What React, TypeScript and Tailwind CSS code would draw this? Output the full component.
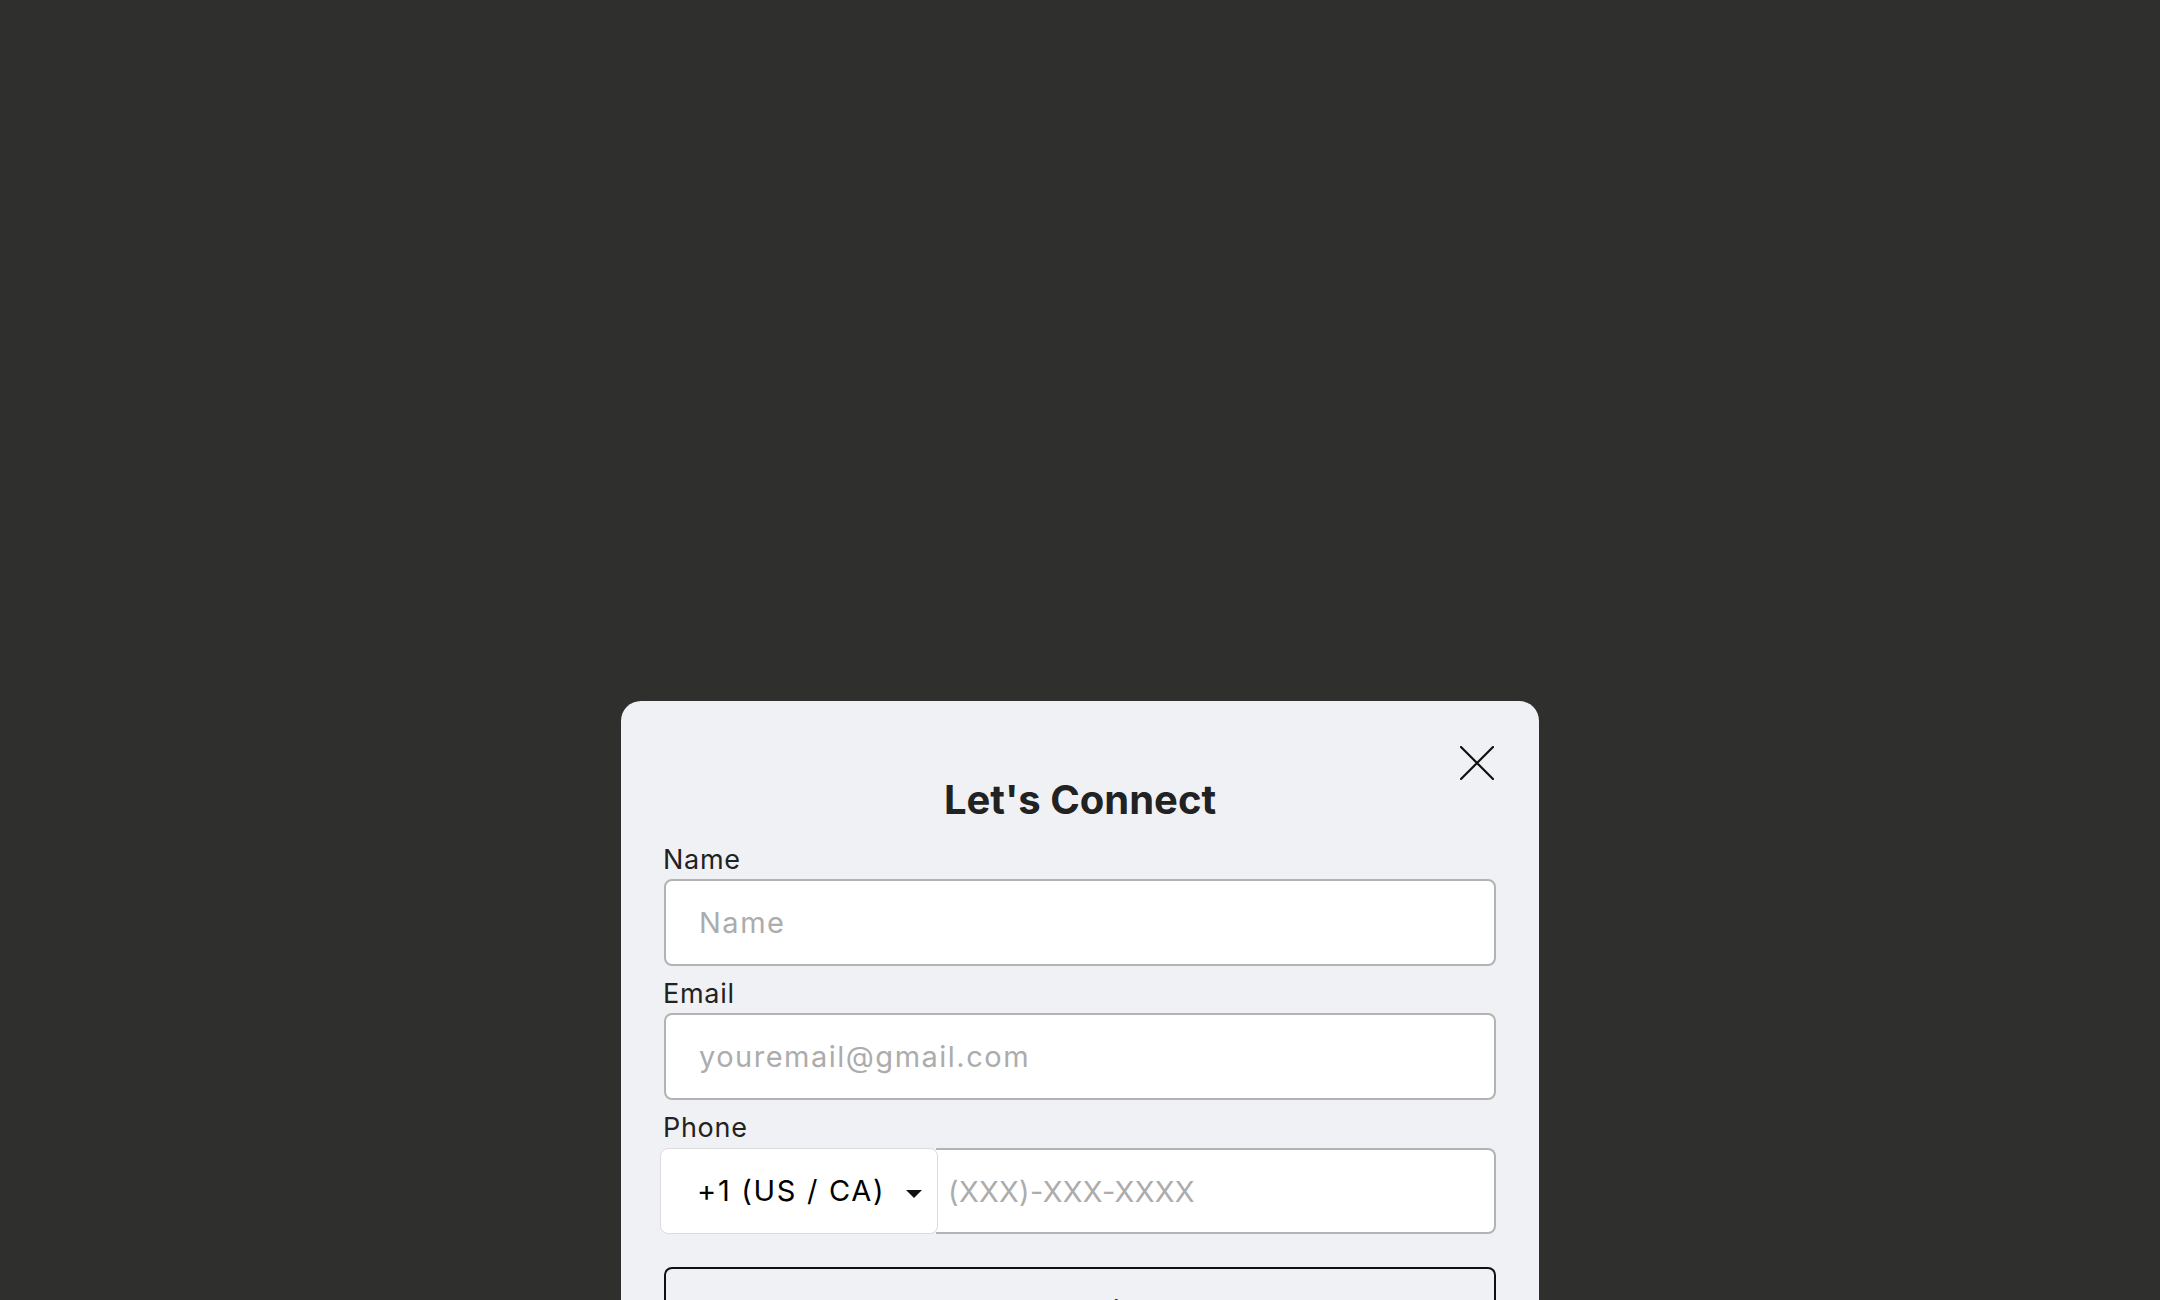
import { useState } from 'react';

const inputCls =
  'w-full h-[87px] px-[33px] rounded-[8px] border-2 border-[#b3b3b3] bg-white text-[29px] tracking-[1.5px] text-[#222] placeholder-[#acacac] focus:outline-none';

function Label({ children }: { children: string }) {
  return <label className="block -ml-[1px] text-[27px] leading-[32px] tracking-[0.7px] text-[#222] mb-[3px]">{children}</label>;
}

export default function App() {
  const [name, setName] = useState('');
  const [email, setEmail] = useState('');
  const [phone, setPhone] = useState('');

  return (
    <div
      className="h-screen w-full overflow-hidden bg-[#2f2f2d] flex justify-center pt-[701px]"
      style={{ fontFamily: 'Inter, "Noto Sans", sans-serif' }}
    >
      <div className="relative w-[918px] h-[700px] bg-[#f0f1f5] rounded-[20px] px-[43px] pt-[75px]">
        <button className="absolute top-[45px] right-[45px] w-[34px] h-[34px]" aria-label="Close">
          <svg viewBox="0 0 34 34" className="w-full h-full" fill="none" stroke="#111" strokeWidth="2.2" strokeLinecap="round">
            <path d="M1 1 L33 33 M33 1 L1 33" />
          </svg>
        </button>

        <h2 className="text-center text-[40px] leading-[48px] font-bold text-[#222] mb-[20px]">Let's Connect</h2>

        <Label>Name</Label>
        <input className={inputCls} placeholder="Name" value={name} onChange={(e) => setName(e.target.value)} />

        <div className="mt-[12px]">
          <Label>Email</Label>
          <input className={inputCls} placeholder="youremail@gmail.com" value={email} onChange={(e) => setEmail(e.target.value)} />
        </div>

        <div className="mt-[12px]">
          <Label>Phone</Label>
          <div className="flex h-[86px] mt-[4px]">
            <div className="relative z-10 -ml-[4px] w-[278px] shrink-0 flex items-center pl-[36px] pr-[15px] bg-white border border-[#dcdcdc] rounded-[8px] text-[29px] tracking-[1.7px] text-black">
              <span className="flex-1 whitespace-nowrap">+1 (US / CA)</span>
              <svg viewBox="0 0 16 8" className="w-[16px] h-[8px] mt-[6px] shrink-0">
                <path d="M0 0 L16 0 L8 8 Z" fill="#111" />
              </svg>
            </div>
            <input
              className="flex-1 min-w-0 h-full -ml-[2px] pl-[12px] pr-[20px] bg-white border-2 border-l-0 border-[#b3b3b3] rounded-r-[8px] text-[29px] tracking-[0.3px] text-[#222] placeholder-[#acacac] focus:outline-none"
              placeholder="(XXX)-XXX-XXXX"
              value={phone}
              onChange={(e) => setPhone(e.target.value)}
            />
          </div>
        </div>

        <button className="mt-[33px] w-full h-[87px] rounded-[8px] border-2 border-[#111] text-[29px] tracking-[1.5px] text-[#222]">
          Submit
        </button>
      </div>
    </div>
  );
}
